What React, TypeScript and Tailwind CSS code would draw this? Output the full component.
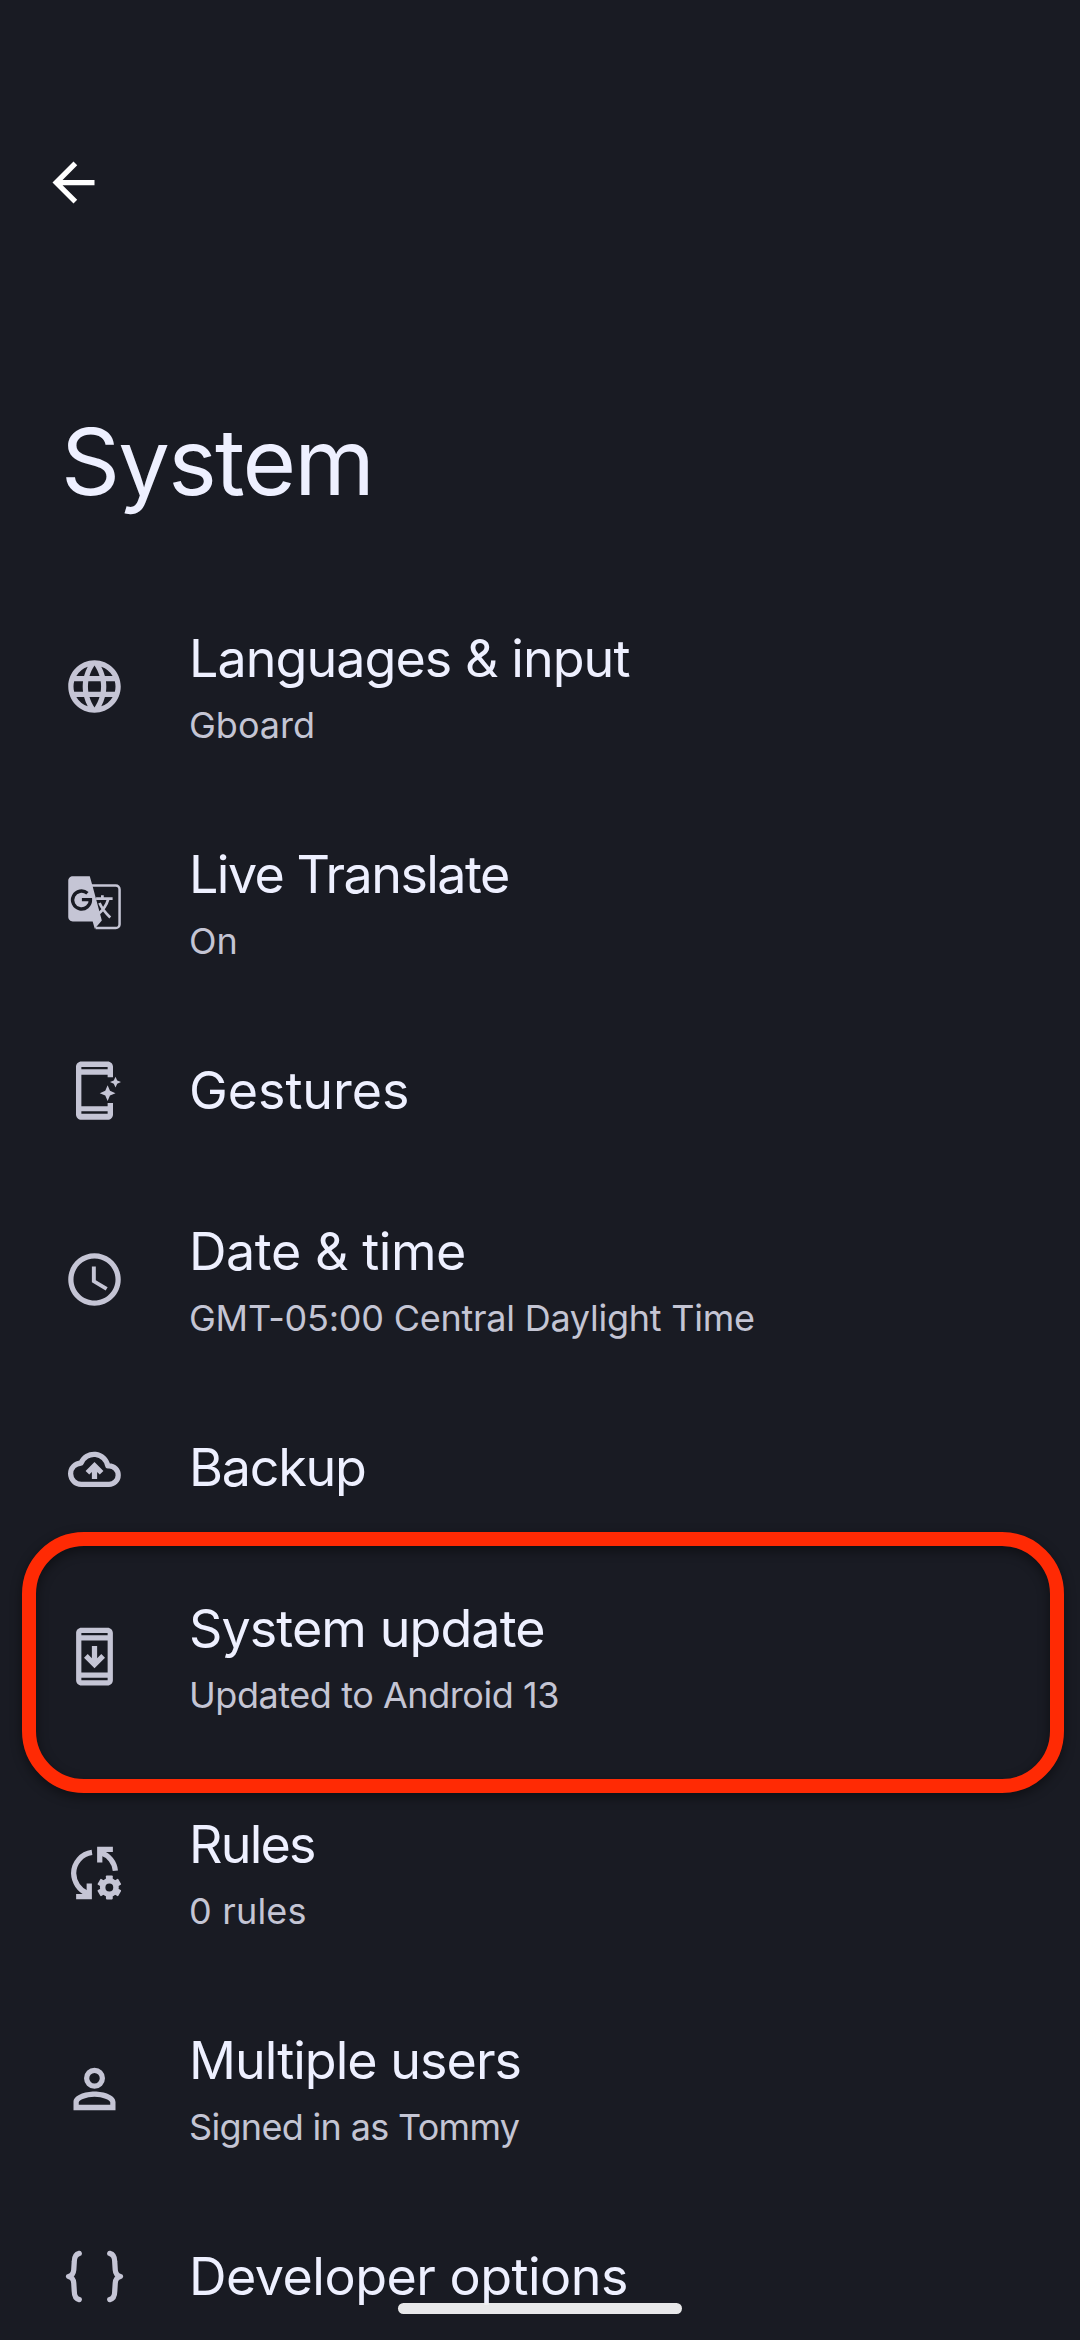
import React from "react";
import { MdArrowBack, MdLanguage, MdSchedule } from "react-icons/md";

type IconProps = { className?: string };

function TranslateIcon({ className }: IconProps) {
  return (
    <svg viewBox="0 0 24 24" fill="none" stroke="currentColor" className={className}>
      <path d="M10.8 5.550H20.100a1.450 1.450 0 0 1 1.450 1.450V20.300a1.450 1.450 0 0 1-1.450 1.450H12.400" strokeWidth=".95" />
      <path d="M12.600 10.500H18.900M15 9.200V10.500M17.300 10.500C16.700 12.700 15.300 14.900 13.200 16.600M13.900 12.200C14.700 14 16.300 16.100 18 17.700" strokeWidth="1.050" />
      <path
        d="M3.700 2H10.200L11.200 5.500L14.800 18.900L12.100 22L11.300 19.200H3.700C2.800 19.200 2 18.400 2 17.500V3.700C2 2.800 2.800 2 3.700 2z"
        fill="currentColor"
        stroke="none"
      />
      <path d="M9.300 8.500A3.400 3.400 0 1 0 10.450 10.900H7.200" className="stroke-[#191b23]" strokeWidth="1.300" />
    </svg>
  );
}

function GesturesIcon({ className }: IconProps) {
  return (
    <svg viewBox="0 0 24 24" fill="currentColor" className={className}>
      <path
        fillRule="evenodd"
        d="M7 .95h10c1.15 0 2.05.9 2.05 2v4H17V6H7v12h10v-1.2h2.05v4.3c0 1.15-.9 2.05-2.05 2.05H7c-1.1 0-2.05-.9-2.05-2.05V3C4.95 1.85 5.9.95 7 .95zM7 3v.9h10V3H7zm0 16.95v.95h10v-.95H7z"
      />
      <path d="M17 10l.9 2.1 2.1.9-2.1.9L17 16l-.9-2.1L14 13l2.1-.9zM20 6.8l.65 1.4L22.1 8.8l-1.45.65L20 10.9l-.65-1.45-1.45-.65 1.45-.6z" />
    </svg>
  );
}

function BackupIcon({ className }: IconProps) {
  return (
    <svg viewBox="0 0 24 24" fill="currentColor" className={className}>
      <path
        d="M7 18.4A4.05 4.05 0 0 1 6.9 10.3 A5.3 5.3 0 0 1 17.05 11.4 h.5 A3.5 3.5 0 0 1 17.5 18.4 Z"
        fill="none"
        stroke="currentColor"
        strokeWidth="2"
        strokeLinejoin="round"
      />
      <path d="M12 9.9l3.4 3.4-1.4 1.4-1-1v2.7h-2v-2.7l-1 1-1.4-1.4z" />
    </svg>
  );
}

function SystemUpdateIcon({ className }: IconProps) {
  return (
    <svg viewBox="0 0 24 24" fill="currentColor" className={className}>
      <path
        fillRule="evenodd"
        d="M7 1h10c1.1 0 2 .9 2 2v18c0 1.1-.9 2-2 2H7c-1.1 0-2-.9-2-2V3c0-1.1.9-2 2-2zm0 2v.9h10V3H7zm0 2.9v12.2h10V5.900zM7 20.100V21h10v-.9z"
      />
      <path d="M16 12.500l-4 4-4-4 1.410-1.410L11 12.670V8h2v4.670l1.590-1.590z" />
    </svg>
  );
}

function RulesIcon({ className }: IconProps) {
  return (
    <svg viewBox="0 0 24 24" fill="currentColor" className={className}>
      <g fill="none" stroke="currentColor" strokeWidth="2">
        <path d="M11.050 4.350A8.100 8.100 0 0 0 4.050 12.300A8.600 8.600 0 0 0 9.300 20" />
        <path d="M10 16.200v5H5" />
        <path d="M14.500 4.450A7.950 7.950 0 0 1 19.950 11.300" />
        <path d="M14 8.200v-5h5" />
      </g>
      <circle cx="17.650" cy="17.700" r="2.550" fill="none" stroke="currentColor" strokeWidth="2.100" />
      {[0, 60, 120, 180, 240, 300].map((angle) => (
        <rect
          key={angle}
          x="16.350"
          y="13.150"
          width="2.600"
          height="1.900"
          rx=".3"
          transform={`rotate(${angle} 17.65 17.7)`}
        />
      ))}
    </svg>
  );
}

function UserIcon({ className }: IconProps) {
  return (
    <svg viewBox="0 0 24 24" fill="currentColor" className={className}>
      <circle cx="12" cy="8.100" r="3" fill="none" stroke="currentColor" strokeWidth="2" />
      <path
        fillRule="evenodd"
        d="M4 20.300v-3.200c0-2.600 4.400-4 8-4s8 1.400 8 4v3.200zM6 18.200h12v-1c0-.8-3-2.100-6-2.100s-6 1.300-6 2.100z"
      />
    </svg>
  );
}

function BracesIcon({ className }: IconProps) {
  return (
    <svg
      viewBox="0 0 24 24"
      fill="none"
      stroke="currentColor"
      strokeWidth="2"
      strokeLinecap="round"
      strokeLinejoin="round"
      className={className}
    >
      <path d="M6.200 3.200C4.700 3.600 4.300 4.800 4.300 6.300L4.100 9.500C4 11 3.500 11.700 2.100 12c1.400.3 1.900 1 2 2.500l.2 3.200c0 1.500.4 2.700 1.900 3.100" />
      <path d="M17.800 3.200c1.500.4 1.900 1.600 1.900 3.100l.2 3.200c.1 1.500.6 2.200 2 2.500-1.400.3-1.900 1-2 2.500l-.2 3.200c0 1.500-.4 2.700-1.900 3.100" />
    </svg>
  );
}

type Item = {
  title: string;
  titleClass: string;
  sub?: string;
  subClass?: string;
  Icon: React.ComponentType<IconProps>;
  highlighted?: boolean;
};

const items: Item[] = [
  { title: "Languages & input", titleClass: "tracking-[-0.94px]", sub: "Gboard", subClass: "tracking-[0px]", Icon: MdLanguage },
  { title: "Live Translate", titleClass: "tracking-[-1.54px]", sub: "On", subClass: "tracking-[0px]", Icon: TranslateIcon },
  { title: "Gestures", titleClass: "tracking-[-0.05px]", Icon: GesturesIcon },
  { title: "Date & time", titleClass: "tracking-[-0.44px]", sub: "GMT-05:00 Central Daylight Time", subClass: "tracking-[-0.24px]", Icon: MdSchedule },
  { title: "Backup", titleClass: "tracking-[-1.24px]", Icon: BackupIcon },
  { title: "System update", titleClass: "tracking-[-0.91px]", sub: "Updated to Android 13", subClass: "tracking-[-0.44px]", Icon: SystemUpdateIcon, highlighted: true },
  { title: "Rules", titleClass: "tracking-[-1.78px]", sub: "0 rules", subClass: "tracking-[0.19px]", Icon: RulesIcon },
  { title: "Multiple users", titleClass: "tracking-[-0.97px]", sub: "Signed in as Tommy", subClass: "tracking-[-0.68px]", Icon: UserIcon },
  { title: "Developer options", titleClass: "tracking-[-0.5px]", Icon: BracesIcon },
];

function Row({ title, titleClass, sub, subClass, Icon, highlighted }: Item) {
  return (
    <li className={`relative flex shrink-0 items-center ${sub ? "h-[216px]" : "h-[161px]"}`}>
      <div className="flex w-[189px] shrink-0 items-center pl-[63px] text-[#c5c5d5]">
        <Icon className="size-[63px]" />
      </div>
      <div className="self-start whitespace-nowrap pt-[49px]">
        <div className={`text-[52px] leading-[64px] text-[#eef0ff] ${titleClass}`}>{title}</div>
        {sub && <div className={`mt-[10px] text-[36px] leading-[48px] text-[#c4c5d4] ${subClass}`}>{sub}</div>}
      </div>
      {highlighted && (
        <div className="absolute -top-4 right-4 left-[22px] h-[261px] rounded-[62px] border-[14px] border-[#ff2a04] shadow-[0_4px_12px_rgba(0,0,0,0.45),inset_0_4px_12px_rgba(0,0,0,0.45)]" />
      )}
    </li>
  );
}

export default function App() {
  return (
    <main className="relative flex h-[2340px] w-[1080px] flex-col overflow-hidden bg-[#191b23] font-['Inter',sans-serif]">
      <header className="h-[578px] shrink-0">
        <button type="button" aria-label="Back" className="mt-[151px] ml-[42px] block text-white">
          <MdArrowBack className="size-[63px]" />
        </button>
        <h1 className="mt-[193px] ml-[61px] text-[92px] leading-[110px] font-normal tracking-[-1.77px] text-[#eef0ff]">System</h1>
      </header>
      <ul className="flex flex-col">
        {items.map((item) => (
          <Row key={item.title} {...item} />
        ))}
      </ul>
      <div className="absolute bottom-[26px] left-[398px] h-[11px] w-[284px] rounded-full bg-[#f0f0f1]/97" />
    </main>
  );
}
